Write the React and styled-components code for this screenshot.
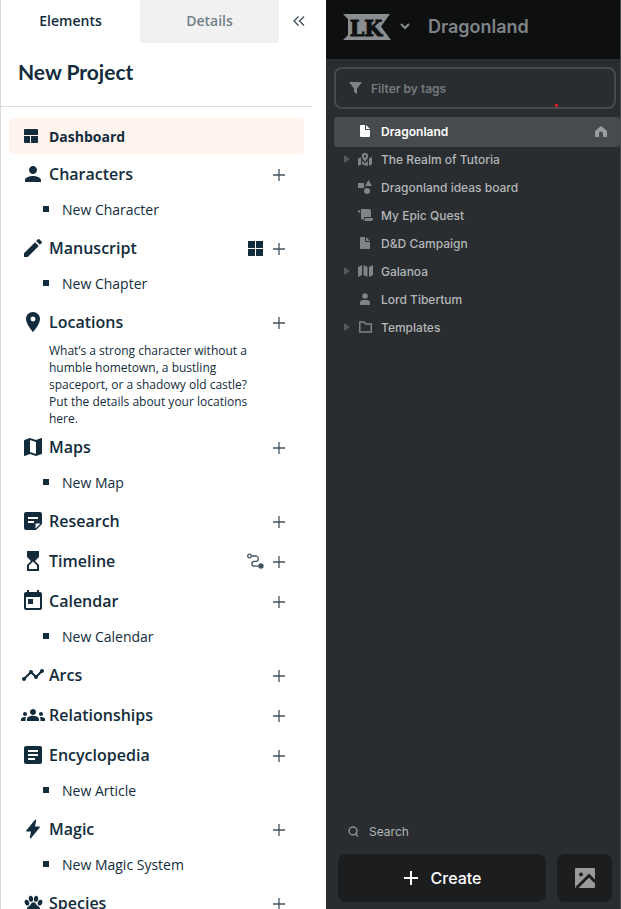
import React from 'react'
import styled, { createGlobalStyle } from 'styled-components';
import { MdPerson, MdEdit, MdLocationOn, MdMap, MdHourglassTop, MdToday, MdTimeline, MdGroups, MdArticle } from 'react-icons/md';
import { IoFlash, IoPaw } from 'react-icons/io5';

const GlobalStyle = createGlobalStyle`
    * {
        box-sizing: border-box;
    }
    body {
        margin: 0;
        background: #fff;
    }
    button, input {
        font: inherit;
        color: inherit;
        border: 0;
        padding: 0;
        background: none;
    }
    button {
        cursor: pointer;
    }
    a {
        color: inherit;
        text-decoration: none;
    }
    ul {
        list-style: none;
        margin: 0;
        padding: 0;
    }
    svg {
        display: block;
        flex-shrink: 0;
    }
`;

const Page = styled.div`
    display: grid;
    grid-template-columns: minmax(0, 21fr) minmax(0, 19fr);
    height: 100vh;
    overflow: hidden;
`;

/* Project panel */

const ProjectPanel = styled.aside`
    margin-right: 14px;
    border-left: 1px solid #d9d9d9;
    background: #fff;
    color: #132c3c;
    font-family: "Open Sans", "Noto Sans", sans-serif;
    overflow: hidden;
`;

const Tabs = styled.nav`
    display: flex;
    height: 43px;
`;

const Tab = styled.button`
    flex: 1;
    padding-bottom: 2px;
    background: ${props => props.$active ? '#fff' : '#f1f1f1'};
    color: ${props => props.$active ? '#132c3c' : '#71808a'};
    font-size: 14px;
    font-weight: 600;
`;

const CollapseButton = styled.button`
    display: flex;
    align-items: center;
    justify-content: center;
    width: 33px;
    padding: 0 0 2px 6px;
    color: #41535f;
`;

const ProjectTitle = styled.h1`
    margin: 0;
    padding: 15px 17px 21px;
    border-bottom: 1px solid #dedede;
    font-family: Lato, sans-serif;
    font-size: 21px;
    font-weight: 700;
    line-height: 27px;
`;

const Elements = styled.div`
    padding: 11px 8px 0;
`;

const DashboardLink = styled.a`
    display: flex;
    align-items: center;
    gap: 8px;
    height: 36px;
    padding-left: 12px;
    border-radius: 4px;
    background: #fff5ee;
    font-size: 14px;
    font-weight: 700;
`;

const IconBox = styled.span`
    display: flex;
    align-items: center;
    justify-content: center;
    width: ${props => props.$size || 24}px;
    flex-shrink: 0;
`;

const CategoryRow = styled.div`
    display: flex;
    align-items: center;
    gap: 4px;
    height: 40px;
    padding: 0 17px 0 12px;
`;

const CategoryName = styled.h2`
    flex: 1;
    margin: 0;
    font-size: 16px;
    font-weight: 600;
    line-height: 22px;
`;

const RowButton = styled.button`
    display: flex;
    align-items: flex-end;
    justify-content: center;
    width: 16px;
    height: 16px;
    margin-left: 4px;
    color: #41535f;
`;

const ChildLink = styled.a`
    display: flex;
    align-items: center;
    gap: 13px;
    height: 34px;
    padding: 0 0 4px 34px;
    font-size: 14px;

    &::before {
        content: '';
        width: 6px;
        height: 6px;
        background: #132c3c;
    }
`;

const Description = styled.p`
    margin: 0;
    padding: 0 48px 0 40px;
    font-size: 12px;
    line-height: 17px;
`;

/* World panel */

const WorldPanel = styled.aside`
    display: flex;
    flex-direction: column;
    min-height: 0;
    border-right: 1px solid #4a4d4f;
    background: #292d30;
    color: #b4b6b7;
    font-family: Inter, sans-serif;
`;

const WorldHeader = styled.header`
    display: flex;
    align-items: center;
    height: 59px;
    padding: 0 17px 6px;
    background: #0e1010;
    color: #8b8e90;
`;

const LogoButton = styled.button`
    display: flex;
    align-items: center;
    gap: 9px;
`;

const WorldTitle = styled.h1`
    margin: 0 0 0 18px;
    color: #7f8488;
    font-size: 18px;
    font-weight: 600;
    line-height: 24px;
`;

const FilterBox = styled.label`
    position: relative;
    display: flex;
    align-items: center;
    gap: 9px;
    height: 42px;
    margin: 8px 4px 8px 8px;
    padding: 0 13px;
    border: 2px solid #484b4d;
    border-radius: 8px;
    color: #808385;
`;

const FilterInput = styled.input`
    flex: 1;
    min-width: 0;
    outline: none;
    font-size: 12px;
    font-weight: 600;

    &::placeholder {
        color: #77797b;
        opacity: 1;
    }
`;

const FilterDot = styled.span`
    position: absolute;
    right: 56px;
    bottom: 0;
    width: 3px;
    height: 3px;
    border-radius: 1px;
    background: #e01b24;
`;

const Tree = styled.ul`
    flex: 1;
    min-height: 0;
    padding-left: 8px;
    overflow: hidden;
`;

const TreeItem = styled.a`
    display: flex;
    align-items: center;
    height: 28px;
    padding: 0 13px 0 10px;
    border-radius: 3px;
    background: ${props => props.$active ? '#484b4d' : 'none'};
    box-shadow: ${props => props.$active ? '0 2px 0 #484b4d' : 'none'};
    color: ${props => props.$active ? '#fff' : '#b4b6b7'};
    font-size: 12px;
    font-weight: ${props => props.$active ? 600 : 500};
`;

const Caret = styled.span`
    width: 6px;
    color: #55595b;
`;

const TreeIcon = styled.span`
    display: flex;
    justify-content: center;
    width: 30px;
    color: ${props => props.$active ? '#fff' : '#808486'};
`;

const TreeLabel = styled.span`
    flex: 1;
    padding-left: 1px;
`;

const HomeMark = styled.span`
    color: #9a9c9d;
`;

const SearchButton = styled.button`
    display: flex;
    align-items: center;
    gap: 10px;
    height: 46px;
    padding-left: 22px;
    font-size: 12px;
`;

const Footer = styled.footer`
    display: flex;
    gap: 11px;
    padding: 0 8px 7px 12px;
`;

const FooterButton = styled.button`
    display: flex;
    flex: ${props => props.$wide ? '1' : '0 0 55px'};
    align-items: center;
    justify-content: center;
    gap: 12px;
    height: 48px;
    border-radius: 8px;
    background: #1c1d1f;
    color: ${props => props.$wide ? '#fff' : '#97999a'};
    font-size: 16px;
    font-weight: 500;
`;

const DashboardIcon = () => (
    <svg width="14" height="14" viewBox="0 0 14 14" fill="currentColor">
        <path d="M1 0h12a1 1 0 0 1 1 1v5H0V1a1 1 0 0 1 1-1zM0 7h6v7H1a1 1 0 0 1-1-1zM7 7h7v6a1 1 0 0 1-1 1H7z" />
    </svg>
)

const NoteIcon = () => (
    <svg width="18" height="18" viewBox="0 0 18 18">
        <path d="M2 0h14a2 2 0 0 1 2 2v10l-6 6H2a2 2 0 0 1-2-2V2a2 2 0 0 1 2-2z" fill="currentColor" />
        <path d="M4 5h10v2H4zM4 9h6v2H4zM11.5 16.5v-5h5z" fill="#fff" />
    </svg>
)

const GridIcon = () => (
    <svg width="15" height="15" viewBox="0 0 15 15" fill="#132c3c">
        <path d="M0 0h7v7H0zM8 0h7v7H8zM0 8h7v7H0zM8 8h7v7H8z" />
    </svg>
)

const RouteIcon = () => (
    <svg width="17" height="16" viewBox="0 0 17 16" fill="none" stroke="currentColor" strokeWidth="1.3">
        <circle cx="2.5" cy="3" r="1.8" />
        <path d="M4.5 3h5a2.8 2.8 0 0 1 0 5.3H7.3a2.4 2.4 0 0 0 0 4.9h5" />
        <circle cx="14" cy="13" r="2" fill="currentColor" />
    </svg>
)

const PlusIcon = () => (
    <svg width="12" height="14" viewBox="0 0 12 14" fill="none" stroke="currentColor" strokeWidth="1.3">
        <path d="M6 1v12M0 7h12" />
    </svg>
)

const CollapseIcon = () => (
    <svg width="12" height="10" viewBox="0 0 12 10" fill="none" stroke="currentColor" strokeWidth="1.4">
        <path d="M5.5.5L1 5l4.5 4.5M11 .5L6.5 5l4.5 4.5" />
    </svg>
)

const Logo = () => (
    <svg width="48" height="26" viewBox="0 0 48 26" role="img" aria-label="LK">
        <path d="M0 0h47l-9 12.5L48 26H0l5-5V5z" fill="#8b8e90" />
        <text x="23" y="22" textAnchor="middle" fill="#0e1010" stroke="#0e1010" strokeWidth="1" fontFamily="DejaVu Serif Condensed, DejaVu Serif, serif" fontSize="23" fontWeight="700">LK</text>
    </svg>
)

const ChevronIcon = () => (
    <svg width="10" height="7" viewBox="0 0 10 7" fill="none" stroke="currentColor" strokeWidth="2">
        <path d="M1 1l4 4 4-4" />
    </svg>
)

const FunnelIcon = () => (
    <svg width="13" height="12" viewBox="0 0 13 12" fill="currentColor">
        <path d="M0 0h13L8 6.5V12l-3-2V6.5z" />
    </svg>
)

const FileIcon = () => (
    <svg width="10" height="12" viewBox="0 0 10 12" fill="currentColor">
        <path d="M0 1a1 1 0 0 1 1-1h4v5h5v6a1 1 0 0 1-1 1H1a1 1 0 0 1-1-1zM6 0l4 4H6z" />
    </svg>
)

const RealmIcon = () => (
    <svg width="14" height="13" viewBox="0 0 14 13" fill="currentColor">
        <path fillRule="evenodd" d="M7 0a3.2 3.2 0 0 1 3.200 3.200C10.200 5.200 7 8.500 7 8.500S3.800 5.200 3.800 3.200A3.200 3.200 0 0 1 7 0zm0 2a1.200 1.200 0 1 0 0 2.400A1.200 1.200 0 0 0 7 2z" />
        <path d="M0 5.500l3-1.200V11.500L0 13zM4.200 7.500l2.800 3 2.800-3V13l-5.600-1.500zM11 5.500l3-1.500v7.300l-3 1.500z" />
    </svg>
)

const ShapesIcon = () => (
    <svg width="14" height="14" viewBox="0 0 14 14" fill="currentColor">
        <path d="M0 3h6v5H0zM10.5 0l3.5 6H7z" />
        <circle cx="9" cy="11" r="3" />
    </svg>
)

const ScrollIcon = () => (
    <svg width="15" height="12" viewBox="0 0 15 12" fill="currentColor">
        <path d="M0 2a1.200 1.200 0 0 1 2.200 0v1.500H0zM3 0h8a2 2 0 0 1 2 2v6H7a1 1 0 0 0-1 1v1.500a2 2 0 0 1-3-1.500z" />
        <path d="M7 9h8v1a2 2 0 0 1-2 2H5.500A2 2 0 0 0 7 10.500z" />
    </svg>
)

const MapIcon = () => (
    <svg width="15" height="12" viewBox="0 0 15 12" fill="currentColor">
        <path d="M0 2l4-2v10l-4 2zM5.500 0l4 2v10l-4-2zM11 2l4-2v10l-4 2z" />
    </svg>
)

const PersonIcon = () => (
    <svg width="10" height="12" viewBox="0 0 10 12" fill="currentColor">
        <circle cx="5" cy="3" r="2.8" />
        <path d="M0 10a3 3 0 0 1 3-3h4a3 3 0 0 1 3 3v1a1 1 0 0 1-1 1H1a1 1 0 0 1-1-1z" />
    </svg>
)

const FolderIcon = () => (
    <svg width="13" height="12" viewBox="0 0 13 12" fill="none" stroke="currentColor" strokeWidth="1.5">
        <path d="M.8 1h4.200l1.800 2h5.400v8H.8z" />
    </svg>
)

const HomeIcon = () => (
    <svg width="12" height="11" viewBox="0 0 12 11" fill="currentColor">
        <path d="M6 0l6 5v6H8V7.500a2 2 0 0 0-4 0V11H0V5z" />
    </svg>
)

const CaretIcon = () => (
    <svg width="6" height="8" viewBox="0 0 6 8" fill="currentColor">
        <path d="M0 0l6 4-6 4z" />
    </svg>
)

const SearchIcon = () => (
    <svg width="11" height="11" viewBox="0 0 11 11" fill="none" stroke="#8b8e90" strokeWidth="1.5">
        <circle cx="5" cy="5" r="4" />
        <path d="M7 7l3 3.5" />
    </svg>
)

const CreateIcon = () => (
    <svg width="16" height="16" viewBox="0 0 16 16" fill="currentColor">
        <path d="M7 1h2v6h6v2H9v6H7V9H1V7h6z" />
    </svg>
)

const PictureIcon = () => (
    <svg width="20" height="20" viewBox="0 0 20 20">
        <path d="M1 0h18a1 1 0 0 1 1 1v18a1 1 0 0 1-1 1H1a1 1 0 0 1-1-1V1a1 1 0 0 1 1-1z" fill="currentColor" />
        <circle cx="6" cy="6.500" r="2" fill="#1c1d1f" />
        <path d="M1.500 20L14 7.500l6.500 6.500" fill="none" stroke="#1c1d1f" strokeWidth="3" />
    </svg>
)

const categories = [
    { name: 'Characters', icon: <MdPerson size={24} />, child: 'New Character' },
    { name: 'Manuscript', icon: <MdEdit size={24} />, child: 'New Chapter', extra: 'Board view', extraIcon: <GridIcon /> },
    { name: 'Locations', icon: <MdLocationOn size={24} />, description: 'What’s a strong character without a humble hometown, a bustling spaceport, or a shadowy old castle? Put the details about your locations here.' },
    { name: 'Maps', icon: <MdMap size={24} />, child: 'New Map' },
    { name: 'Research', icon: <NoteIcon /> },
    { name: 'Timeline', icon: <MdHourglassTop size={24} />, extra: 'Timeline view', extraIcon: <RouteIcon /> },
    { name: 'Calendar', icon: <MdToday size={24} />, child: 'New Calendar' },
    { name: 'Arcs', icon: <MdTimeline size={24} /> },
    { name: 'Relationships', icon: <MdGroups size={24} /> },
    { name: 'Encyclopedia', icon: <MdArticle size={24} />, child: 'New Article' },
    { name: 'Magic', icon: <IoFlash size={20} />, child: 'New Magic System' },
    { name: 'Species', icon: <IoPaw size={19} /> },
]

const pages = [
    { name: 'Dragonland', icon: <FileIcon />, active: true },
    { name: 'The Realm of Tutoria', icon: <RealmIcon />, folded: true },
    { name: 'Dragonland ideas board', icon: <ShapesIcon /> },
    { name: 'My Epic Quest', icon: <ScrollIcon /> },
    { name: 'D&D Campaign', icon: <FileIcon /> },
    { name: 'Galanoa', icon: <MapIcon />, folded: true },
    { name: 'Lord Tibertum', icon: <PersonIcon /> },
    { name: 'Templates', icon: <FolderIcon />, folded: true },
]

const Category = ({ category }) => (
    <section>
        <CategoryRow>
            <IconBox>{category.icon}</IconBox>
            <CategoryName>{category.name}</CategoryName>
            {category.extra &&
            <RowButton aria-label={category.extra}>{category.extraIcon}</RowButton>
            }
            <RowButton aria-label={`Add to ${category.name}`}><PlusIcon /></RowButton>
        </CategoryRow>
        {category.child && <ChildLink href="#">{category.child}</ChildLink>}
        {category.description && <Description>{category.description}</Description>}
    </section>
)

const App = () => (
    <Page>
        <GlobalStyle />
        <ProjectPanel>
            <Tabs>
                <Tab $active>Elements</Tab>
                <Tab>Details</Tab>
                <CollapseButton aria-label="Collapse"><CollapseIcon /></CollapseButton>
            </Tabs>
            <ProjectTitle>New Project</ProjectTitle>
            <Elements>
                <DashboardLink href="#">
                    <IconBox $size={20}><DashboardIcon /></IconBox>
                    Dashboard
                </DashboardLink>
                {categories.map(category => <Category key={category.name} category={category} />)}
            </Elements>
        </ProjectPanel>
        <WorldPanel>
            <WorldHeader>
                <LogoButton aria-label="LK menu">
                    <Logo />
                    <ChevronIcon />
                </LogoButton>
                <WorldTitle>Dragonland</WorldTitle>
            </WorldHeader>
            <FilterBox>
                <FunnelIcon />
                <FilterInput type="text" placeholder="Filter by tags" aria-label="Filter by tags" />
                <FilterDot />
            </FilterBox>
            <Tree>
                {pages.map(page =>
                <li key={page.name}>
                    <TreeItem href="#" $active={page.active}>
                        <Caret>{page.folded && <CaretIcon />}</Caret>
                        <TreeIcon $active={page.active}>{page.icon}</TreeIcon>
                        <TreeLabel>{page.name}</TreeLabel>
                        {page.active && <HomeMark><HomeIcon /></HomeMark>}
                    </TreeItem>
                </li>
                )}
            </Tree>
            <SearchButton><SearchIcon />Search</SearchButton>
            <Footer>
                <FooterButton $wide><CreateIcon />Create</FooterButton>
                <FooterButton aria-label="Images"><PictureIcon /></FooterButton>
            </Footer>
        </WorldPanel>
    </Page>
)

export default App
